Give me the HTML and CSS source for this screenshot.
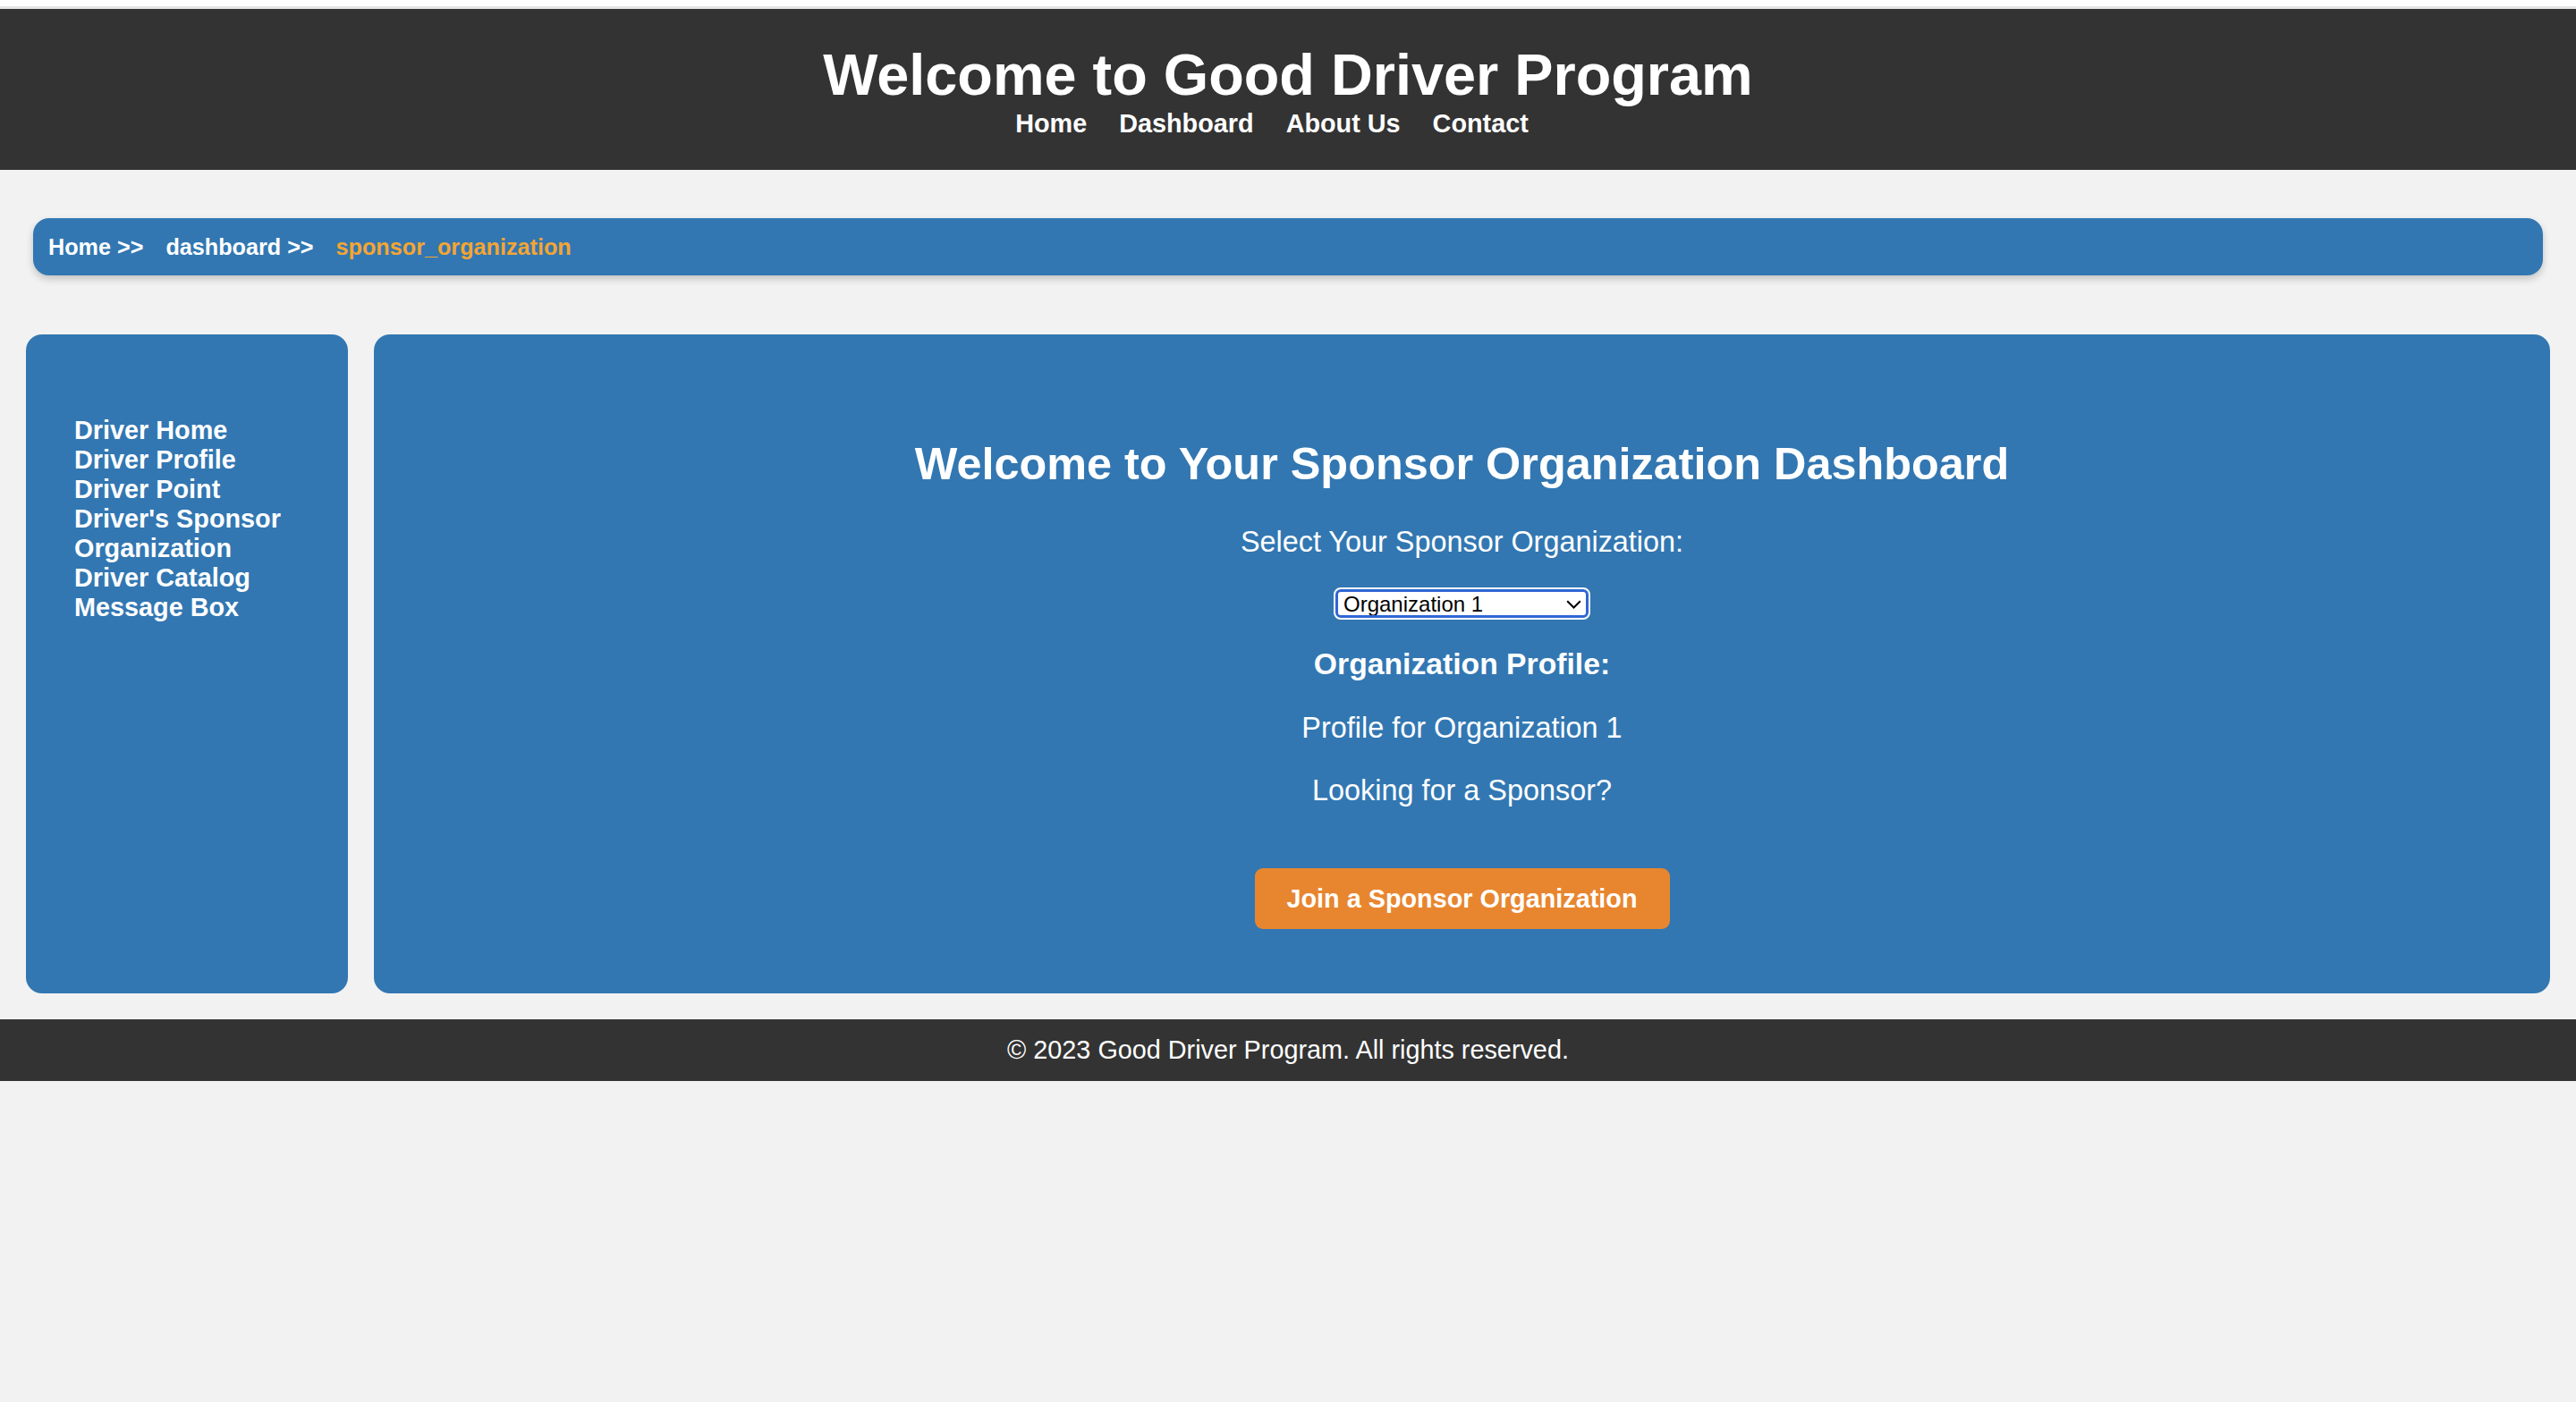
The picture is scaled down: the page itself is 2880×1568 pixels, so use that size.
FILE: index.html
```html
<!DOCTYPE html>
<html lang="en">
<head>
<meta charset="utf-8">
<title>Sponsor Organization</title>
<link rel="stylesheet" href="styles.css">
</head>
<body>
<div class="top-strip"></div>
<header class="site-header">
  <h1 class="site-title">Welcome to Good Driver Program</h1>
  <nav class="site-nav">
    <a href="#">Home</a>
    <a href="#">Dashboard</a>
    <a href="#">About Us</a>
    <a href="#">Contact</a>
  </nav>
</header>

<div class="breadcrumb">
  <a href="#">Home &gt;&gt;</a>
  <a href="#">dashboard &gt;&gt;</a>
  <span class="current">sponsor_organization</span>
</div>

<div class="layout">
  <aside class="sidebar">
    <ul class="side-menu">
      <li><a href="#">Driver Home</a></li>
      <li><a href="#">Driver Profile</a></li>
      <li><a href="#">Driver Point</a></li>
      <li><a href="#">Driver's Sponsor Organization</a></li>
      <li><a href="#">Driver Catalog</a></li>
      <li><a href="#">Message Box</a></li>
    </ul>
  </aside>
  <main class="content">
    <h2 class="content-title">Welcome to Your Sponsor Organization Dashboard</h2>
    <p class="select-label">Select Your Sponsor Organization:</p>
    <div class="select-wrap">
      <select class="org-select">
        <option>Organization 1</option>
        <option>Organization 2</option>
        <option>Organization 3</option>
      </select>
      <svg class="chev" width="17" height="10" viewBox="0 0 17 10"><path d="M1.2 1.2 L8.5 8.5 L15.8 1.2" fill="none" stroke="#000" stroke-width="2"/></svg>
    </div>
    <h3 class="profile-title">Organization Profile:</h3>
    <p class="profile-text">Profile for Organization 1</p>
    <p class="profile-text">Looking for a Sponsor?</p>
    <button class="join-btn" type="button">Join a Sponsor Organization</button>
  </main>
</div>

<footer class="site-footer">&copy; 2023 Good Driver Program. All rights reserved.</footer>
</body>
</html>
```

FILE: styles.css
```css
html {
  background: #f2f2f2;
}
body {
  margin: 0;
  background: #f2f2f2;
  font-family: "Liberation Sans", Arial, Helvetica, sans-serif;
  color: #fff;
}
a {
  color: inherit;
  text-decoration: none;
}

.top-strip {
  height: 7px;
  background: #ffffff;
  border-bottom: 3px solid #e4e4e4;
}

.site-header {
  background: #333333;
  text-align: center;
  padding: 38px 0 36px;
}
.site-title {
  margin: 0;
  font-size: 64.8px;
  line-height: 72px;
  font-weight: bold;
}
.site-nav {
  display: flex;
  justify-content: center;
  gap: 36px;
  margin-top: 2px;
  padding-right: 36px;
  font-size: 28.8px;
  line-height: 32px;
  font-weight: bold;
}

.breadcrumb {
  margin: 54px 37px 0 37px;
  height: 64px;
  background: #3277b2;
  border-radius: 18px;
  box-shadow: 0 4px 8px rgba(0, 0, 0, 0.2);
  display: flex;
  align-items: center;
  gap: 25px;
  padding-left: 17px;
  font-size: 25.2px;
  font-weight: bold;
}
.breadcrumb .current {
  color: #f4a533;
}

.layout {
  display: flex;
  gap: 29px;
  margin: 66px 29px 0 29px;
}
.sidebar {
  width: 360px;
  flex: none;
  background: #3277b2;
  border-radius: 18px;
  padding: 91px 20px 0 54px;
  box-sizing: border-box;
}
.side-menu {
  list-style: none;
  margin: 0;
  padding: 0;
  font-size: 28.8px;
  line-height: 33px;
  font-weight: bold;
}

.content {
  flex: 1;
  background: #3277b2;
  border-radius: 18px;
  padding: 116px 0 72px;
  display: flex;
  flex-direction: column;
  align-items: center;
  text-align: center;
}
.content-title {
  margin: 0;
  font-size: 50.4px;
  line-height: 58px;
  font-weight: bold;
}
.select-label {
  margin: 40px 0 0;
  font-size: 32.4px;
  line-height: 37px;
}
.select-wrap {
  position: relative;
  margin-top: 34px;
  height: 32px;
}
.org-select {
  -webkit-appearance: none;
  appearance: none;
  display: block;
  width: 283px;
  height: 32px;
  box-sizing: border-box;
  margin: 0;
  padding: 0 0 0 6px;
  background: #fff;
  border: 3px solid #2f66d4;
  border-radius: 6px;
  outline: 2px solid #ffffff;
  outline-offset: 0;
  font-family: "Liberation Sans", Arial, sans-serif;
  font-size: 24px;
  color: #000;
}
.chev {
  position: absolute;
  right: 8px;
  top: 12px;
  pointer-events: none;
}
.profile-title {
  margin: 32px 0 0;
  font-size: 33.7px;
  line-height: 39px;
  font-weight: bold;
}
.profile-text {
  margin: 34px 0 0;
  font-size: 32.4px;
  line-height: 37px;
}
.profile-text + .profile-text {
  margin-top: 33px;
}
.join-btn {
  margin-top: 68px;
  height: 68px;
  padding: 0 36px;
  border: none;
  border-radius: 9px;
  background: #e8862f;
  color: #fff;
  font-family: "Liberation Sans", Arial, sans-serif;
  font-size: 28.8px;
  font-weight: bold;
  cursor: pointer;
}

.site-footer {
  margin-top: 29px;
  background: #333333;
  padding: 18px 0;
  text-align: center;
  font-size: 28.8px;
  line-height: 33px;
}
```
